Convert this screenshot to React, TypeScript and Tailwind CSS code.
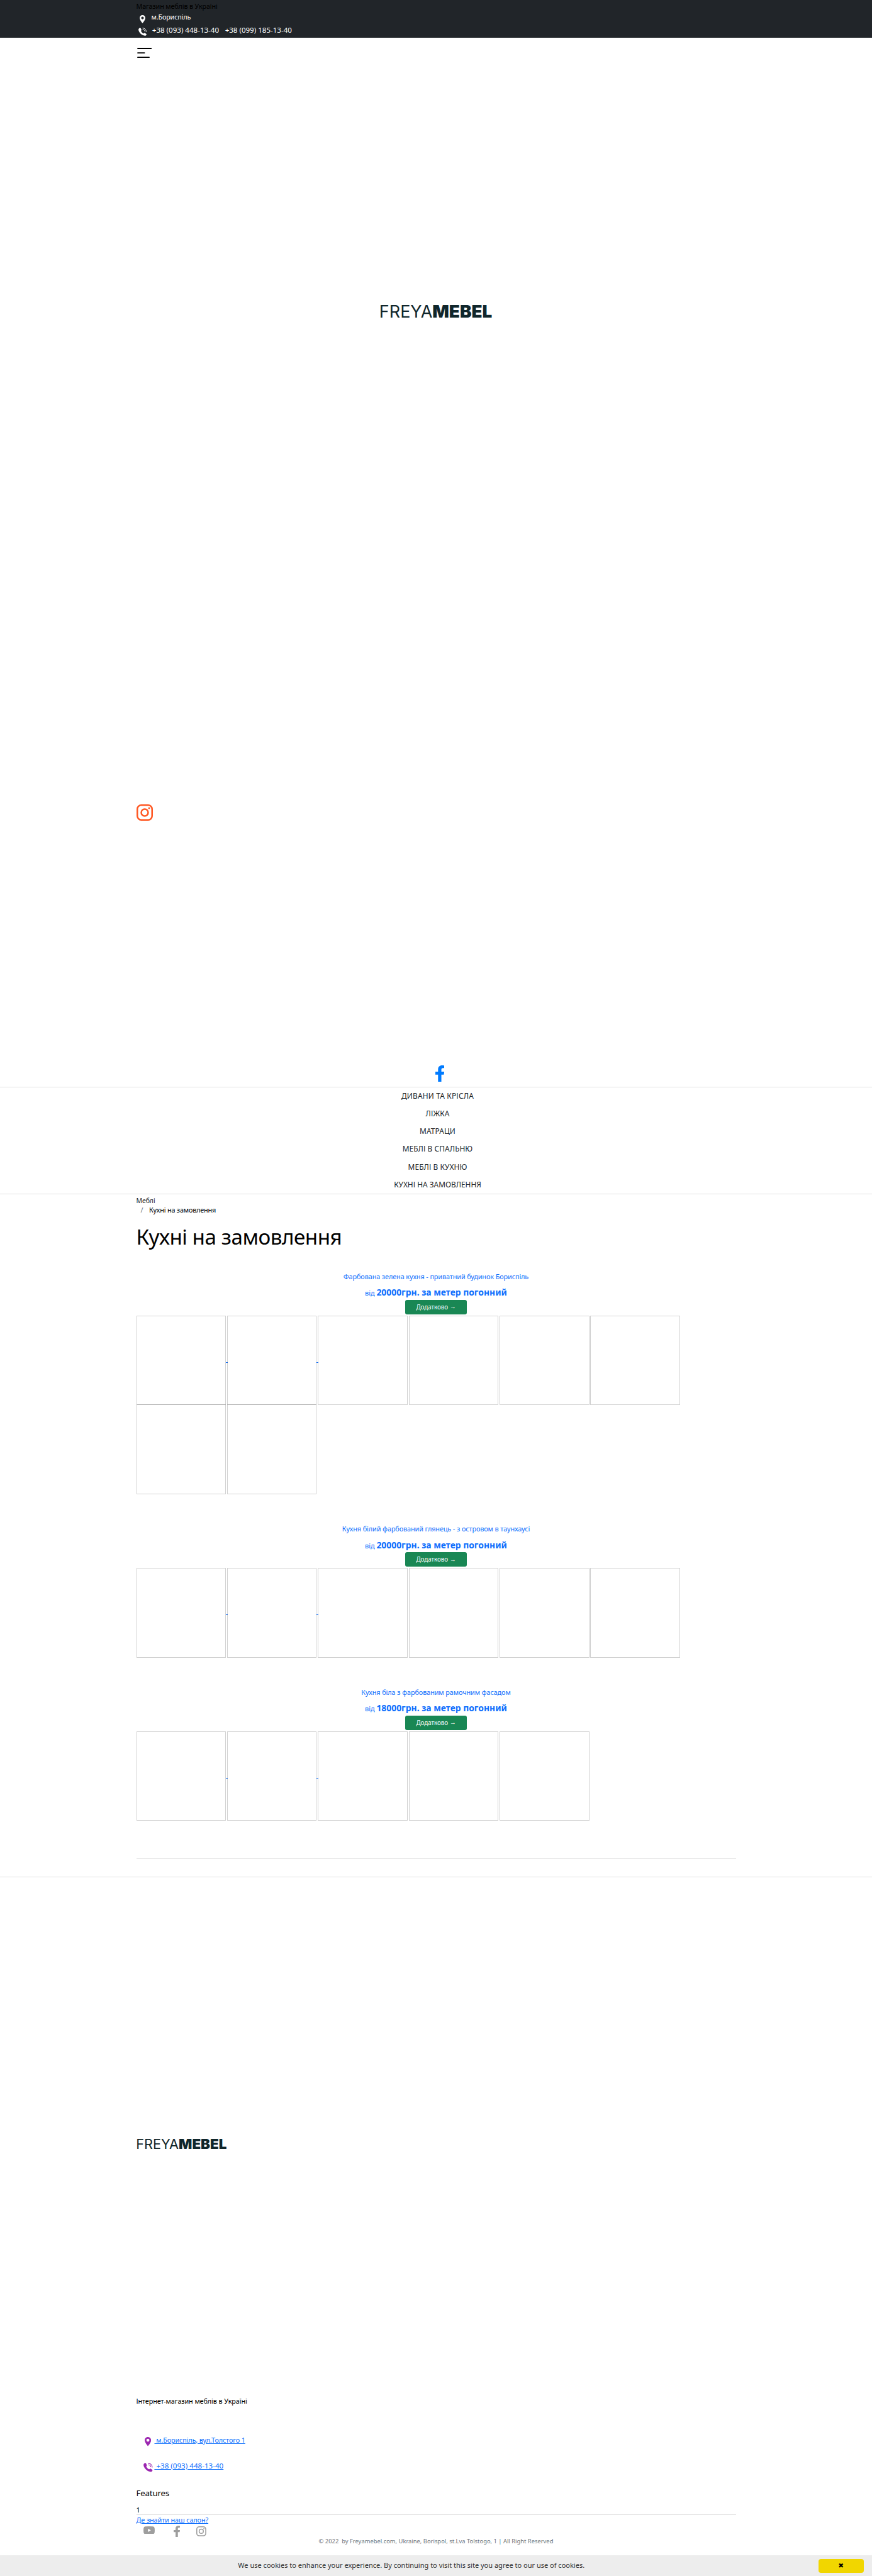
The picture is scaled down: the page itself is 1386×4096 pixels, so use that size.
import React from "react";

type IconProps = { className?: string };

function Pin({ className = "" }: IconProps) {
  return (
    <svg viewBox="5 2 14 20" className={className} fill="currentColor" preserveAspectRatio="none">
      <path
        fillRule="evenodd"
        d="M12 2C8.13 2 5 5.13 5 9c0 5.25 7 13 7 13s7-7.75 7-13c0-3.87-3.13-7-7-7zm0 3.7a3.3 3.3 0 1 1 0 6.6 3.3 3.3 0 0 1 0-6.6z"
      />
    </svg>
  );
}

function Phone({ className = "" }: IconProps) {
  return (
    <svg viewBox="0 0 18 18" className={className} fill="currentColor">
      <path d="M3 .4C1 1.5 0 3 .2 5c.5 4.5 6.3 12 13.8 12.8 2 .2 3.5-1.3 3.8-2.6.2-.9-.2-1.4-.8-1.8L14.3 11.8c-.8-.4-1.5-.2-2.1.5-.7.7-1.4.7-2.2.1C8.3 11.2 6.9 9.700 5.900 8c-.4-.7-.3-1.200.3-1.800.7-.6.8-1.200.4-2L5 1C4.600.2 3.800 0 3 .4z" />
      <path d="M9.300 3.700c3 .3 5 2.300 5.200 5M9 .8c5 .2 8.200 3.700 8.300 8.400" fill="none" stroke="currentColor" strokeWidth="1.300" />
    </svg>
  );
}

function Facebook({ className = "" }: IconProps) {
  return (
    <svg viewBox="22.9 0 274.2 512" className={className} fill="currentColor" preserveAspectRatio="none">
      <path d="M279.14 288l14.22-92.66h-88.91v-60.13c0-25.35 12.42-50.06 52.24-50.06h40.42V6.26S260.43 0 225.36 0c-73.22 0-121.08 44.38-121.08 124.72v70.62H22.89V288h81.39v224h100.17V288z" />
    </svg>
  );
}

function Instagram({ className = "" }: IconProps) {
  return (
    <svg viewBox="0 0 36 36" className={className} fill="none" stroke="currentColor" strokeWidth="3.5">
      <rect x="1.75" y="1.75" width="32.5" height="32.5" rx="8.5" />
      <circle cx="18" cy="18" r="7.6" />
      <circle cx="27.7" cy="8.3" r="2.1" fill="currentColor" stroke="none" />
    </svg>
  );
}

function YouTube({ className = "" }: IconProps) {
  return (
    <svg viewBox="0 0 25 17.5" className={className} fill="currentColor">
      <path
        fillRule="evenodd"
        d="M4 .4Q12.5-.4 21 .4 24.3.7 24.6 4 25.2 8.75 24.6 13.5 24.3 16.8 21 17.1 12.5 17.9 4 17.1.7 16.8.4 13.5-.2 8.75.4 4 .7.7 4 .4zM10 5v7.5l6.5-3.75z"
      />
    </svg>
  );
}

function Logo({ className = "" }: IconProps) {
  return (
    <svg viewBox="0 0 245 27" className={`overflow-visible ${className}`} fill="#10262b" fontFamily="Inter, sans-serif">
      <text x="-3" y="27" fontSize="37.2" fontWeight="400" textLength="117" lengthAdjust="spacingAndGlyphs">
        FREYA
      </text>
      <text x="114" y="27" fontSize="36.8" fontWeight="900" textLength="131.5" lengthAdjust="spacingAndGlyphs">
        MEBEL
      </text>
    </svg>
  );
}

const nav = [
  { label: "ДИВАНИ ТА КРІСЛА", cls: "tracking-[0.2px]" },
  { label: "ЛІЖКА", cls: "tracking-[0.1px]" },
  { label: "МАТРАЦИ", cls: "tracking-[0.1px]" },
  { label: "МЕБЛІ В СПАЛЬНЮ", cls: "tracking-[0.08px]" },
  { label: "МЕБЛІ В КУХНЮ", cls: "tracking-[0.08px]" },
  { label: "КУХНІ НА ЗАМОВЛЕННЯ", cls: "" },
];

const kitchens = [
  { title: "Фарбована зелена кухня - приватний будинок Бориспіль", price: "20000", photos: 8, height: "h-[401.4px]" },
  { title: "Кухня білий фарбований глянець - з островом в таунхаусі", price: "20000", photos: 6, height: "h-[259.65px]" },
  { title: "Кухня біла з фарбованим рамочним фасадом", price: "18000", photos: 5, height: "h-[273.65px]" },
];

function Kitchen({ title, price, photos, height }: (typeof kitchens)[number]) {
  return (
    <section className={`flex flex-col items-center ${height}`}>
      <h2 className="h-5 text-[10.83px] leading-5 tracking-[-0.09px] whitespace-nowrap text-[#0d6efd]">{title}</h2>
      <p className="mt-[5.6px] h-5 text-[10.83px] leading-5 whitespace-nowrap text-[#0d6efd]">
        від <strong className="text-[13.9px] leading-5">{price}грн. за метер погонний</strong>
      </p>
      <button className="mt-[1.6px] flex h-[22.5px] w-[97.5px] shrink-0 items-center justify-center rounded-[3px] bg-[#198754] text-white">
        <span className="text-[9.85px] tracking-[-0.05px]">Додатково</span>
        <span className="ml-[3px] font-['Liberation_Sans',sans-serif] text-[9.5px]">→</span>
      </button>
      <div className="mt-[2.1px] flex w-full flex-wrap content-start gap-x-[1.8px]">
        {Array.from({ length: photos }, (_, i) => (
          <div key={i} className="relative mb-[-1.2px] h-[142.7px] w-[142.6px] border border-black/[.18]">
            {i < 2 && <span className="absolute top-[73px] -right-[3.5px] h-px w-[3px] bg-[#0d6efd]" />}
          </div>
        ))}
      </div>
    </section>
  );
}

export default function App() {
  return (
    <div className="flex h-[4096px] w-[1386px] flex-col overflow-hidden bg-white font-['Noto_Sans',sans-serif] text-[10.83px] text-black">
      <div className="h-[60px] bg-[#212529]">
        <div className="mx-auto w-[953px]">
          <p className="h-[20.4px] leading-[20.4px] tracking-[-0.16px]">Магазин меблів в Україні</p>
          <div className="flex h-[14.4px] pl-[5px] leading-[14.4px] text-white">
            <Pin className="mt-[3.2px] h-[13px] w-[9px]" />
            <span className="ml-[10px] tracking-[-0.16px]">м.Бориспіль</span>
          </div>
          <div className="flex h-[25.2px] pl-[3px] text-[11.55px] leading-[25.2px] text-white">
            <Phone className="mt-[9.1px] h-[13px] w-[13px]" />
            <span className="ml-[9.3px]">+38 (093) 448-13-40</span>
            <span className="ml-[9.6px]">+38 (099) 185-13-40</span>
          </div>
        </div>
      </div>

      <header className="h-[1669px] border-b border-[#dfdfdf] pt-4">
        <div className="mx-auto flex w-[953px] flex-col">
          <svg viewBox="0 0 23 16.2" className="ml-[1.5px] h-[16.2px] w-[23px]" stroke="#000" strokeWidth="1.8" strokeLinecap="round">
            <path d="M1 1h21.3M1 8.1h10.6M1 15.2h18" />
          </svg>
          <Logo className="mt-[392.9px] h-[19.5px] w-[176.9px] self-center" />
          <Instagram className="mt-[774.4px] size-[26px] text-[#ff5722]" />
          <Facebook className="mt-[388.6px] ml-[475px] h-[26px] w-[14.4px] text-[#007bff]" />
        </div>
      </header>

      <nav className="h-[170px] border-b border-[#dfdfdf] pl-[5px] text-center text-[11.9px] text-[#212529]">
        {nav.map((n) => (
          <a key={n.label} className={`block h-[28.15px] leading-[27.6px] ${n.cls}`}>
            {n.label}
          </a>
        ))}
      </nav>

      <main className="mx-auto h-[1085px] w-[953px] shrink-0 pt-[3.2px]">
        <ol className="leading-[14.4px]">
          <li className="h-[14.4px] text-[10.5px] tracking-[-0.08px] text-[#212529]">Меблі</li>
          <li className="flex h-[14.4px] pl-[7px]">
            <span className="text-[#6c757d]">/</span>
            <span className="ml-[9.5px] tracking-[-0.18px]">Кухні на замовлення</span>
          </li>
        </ol>
        <h1 className="mt-[16.5px] mb-[32.4px] h-10 text-[33.2px] leading-10 tracking-[-0.46px]">Кухні на замовлення</h1>
        {kitchens.map((k) => (
          <Kitchen key={k.title} {...k} />
        ))}
        <hr className="border-t border-[#dfdfdf]" />
      </main>

      <footer className="flex grow flex-col border-t border-[#dfdfdf]">
        <div className="mx-auto flex w-[953px] flex-col">
          <Logo className="mt-[415.9px] ml-[1.5px] h-[16px] w-[142px]" />
          <p className="mt-[393.5px] h-4 leading-4 tracking-[-0.1px]">Інтернет-магазин меблів в Україні</p>
          <div className="mt-[45.4px] flex h-4 pl-[13.8px] leading-4 text-[#0d6efd]">
            <Pin className="mt-[3.5px] h-[14.5px] w-[10.2px] text-[#9c27b0]" />
            <a className="ml-[5px] tracking-[-0.13px] whitespace-pre underline">{" м.Бориспіль, вул.Толстого 1"}</a>
          </div>
          <div className="mt-[24.9px] flex h-4 pl-[11.5px] text-[11.55px] leading-4 text-[#0d6efd]">
            <Phone className="mt-[3.6px] h-[14.5px] w-[14.5px] text-[#9c27b0]" />
            <a className="ml-[2.9px] tracking-[0.03px] whitespace-pre underline">{" +38 (093) 448-13-40"}</a>
          </div>
          <h5 className="mt-[25px] h-5 text-[13.35px] leading-5 tracking-[-0.2px]">Features</h5>
          <p className="mt-[9.9px] h-3.5 text-[11.2px] leading-[14px]">1</p>
          <hr className="mt-[0.4px] border-t border-[#dfdfdf]" />
          <a className="mt-px h-3.5 leading-[14px] tracking-[-0.1px] text-[#0d6efd] underline">Де знайти наш салон?</a>
          <div className="mt-[2.1px] flex h-[18.1px] items-start pl-[11.5px] text-[#9e9e9e]">
            <YouTube className="mt-[0.5px] h-[12.7px] w-[18px]" />
            <Facebook className="ml-[29.8px] h-[18.1px] w-[10.2px]" />
            <Instagram className="mt-px ml-[25.9px] size-[15.8px]" />
          </div>
          <p className="mt-[1.2px] h-3 text-center text-[9.4px] leading-3 whitespace-pre text-[#6c757d]">
            {"© 2022  by Freyamebel.com, Ukraine, Borispol, st.Lva Tolstogo, 1 | All Right Reserved"}
          </p>
        </div>
        <div className="mt-auto flex h-[32.7px] items-center bg-[#ededed] pr-[13.5px] text-[#333]">
          <p className="w-[1301px] pl-[6.5px] text-center text-[11.03px]">
            We use cookies to enhance your experience. By continuing to visit this site you agree to our use of cookies.
          </p>
          <button className="ml-auto flex h-[22.2px] w-[71.5px] shrink-0 items-center justify-center rounded-[4px] bg-[#f1d600] font-['DejaVu_Sans',sans-serif] text-[10.5px] text-black">
            ✖
          </button>
        </div>
      </footer>
    </div>
  );
}
